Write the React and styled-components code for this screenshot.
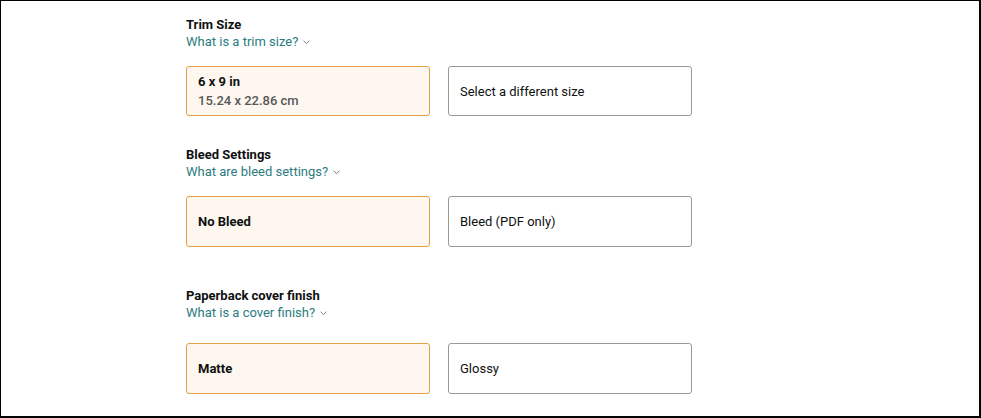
import React from "react";
import styled, { createGlobalStyle } from "styled-components";

const Global = createGlobalStyle`
  html, body { margin: 0; padding: 0; background: #fff; }
  body { font-family: Roboto, "Liberation Sans", Arial, sans-serif; }
  * { box-sizing: border-box; }
`;

const Frame = styled.div`
  width: 981px;
  height: 418px;
  border-style: solid;
  border-color: #000;
  border-width: 1px 2px 2px 1px;
  background: #fff;
  overflow: hidden;
  padding: 15px 0 0 185px;
`;

const Section = styled.section`
  margin-bottom: ${(p) => p.$after || 0}px;
`;

const Title = styled.h3`
  margin: 0;
  font-size: 13px;
  line-height: 17px;
  font-weight: 700;
  color: #0f1111;
`;

const HelpLink = styled.a`
  display: flex;
  width: max-content;
  align-items: center;
  gap: 5px;
  height: 17px;
  font-size: 13px;
  line-height: 17px;
  color: #2b7c80;
  text-decoration: none;
  cursor: pointer;
`;

const Chevron = styled.svg`
  display: block;
  width: 7px;
  height: 5px;
  margin-top: 1px;
`;

const Options = styled.div`
  display: flex;
  gap: 18px;
  margin-top: ${(p) => p.$top}px;
`;

const Option = styled.div`
  width: 244px;
  height: ${(p) => p.$h}px;
  border: 1px solid ${(p) => (p.$selected ? "#e3a144" : "#999")};
  border-radius: 3px;
  background: ${(p) => (p.$selected ? "#fdf7ef" : "#fff")};
  padding: 0 11px;
  display: flex;
  flex-direction: column;
  justify-content: center;
  font-size: 13px;
  line-height: 19px;
  color: #0f1111;
`;

const Main = styled.span`
  font-weight: ${(p) => (p.$bold ? 700 : 400)};
`;

const Sub = styled.span`
  color: #565959;
  font-weight: 500;
`;

const sections = [
  {
    title: "Trim Size",
    link: "What is a trim size?",
    top: 16,
    h: 50,
    after: 30,
    options: [
      { main: "6 x 9 in", sub: "15.24 x 22.86 cm", selected: true },
      { main: "Select a different size" },
    ],
  },
  {
    title: "Bleed Settings",
    link: "What are bleed settings?",
    top: 16,
    h: 51,
    after: 40,
    options: [{ main: "No Bleed", selected: true }, { main: "Bleed (PDF only)" }],
  },
  {
    title: "Paperback cover finish",
    link: "What is a cover finish?",
    top: 22,
    h: 51,
    after: 0,
    options: [{ main: "Matte", selected: true }, { main: "Glossy" }],
  },
];

export default function App() {
  return (
    <>
      <Global />
      <Frame>
        {sections.map((s) => (
          <Section key={s.title} $after={s.after}>
            <Title>{s.title}</Title>
            <HelpLink>
              {s.link}
              <Chevron viewBox="0 0 7 5">
                <path d="M0.6 0.8 L3.5 3.6 L6.4 0.8" fill="none" stroke="#6f7b7c" strokeWidth="1" />
              </Chevron>
            </HelpLink>
            <Options $top={s.top}>
              {s.options.map((o) => (
                <Option key={o.main} $selected={o.selected} $h={s.h}>
                  <Main $bold={o.selected}>{o.main}</Main>
                  {o.sub && <Sub>{o.sub}</Sub>}
                </Option>
              ))}
            </Options>
          </Section>
        ))}
      </Frame>
    </>
  );
}
